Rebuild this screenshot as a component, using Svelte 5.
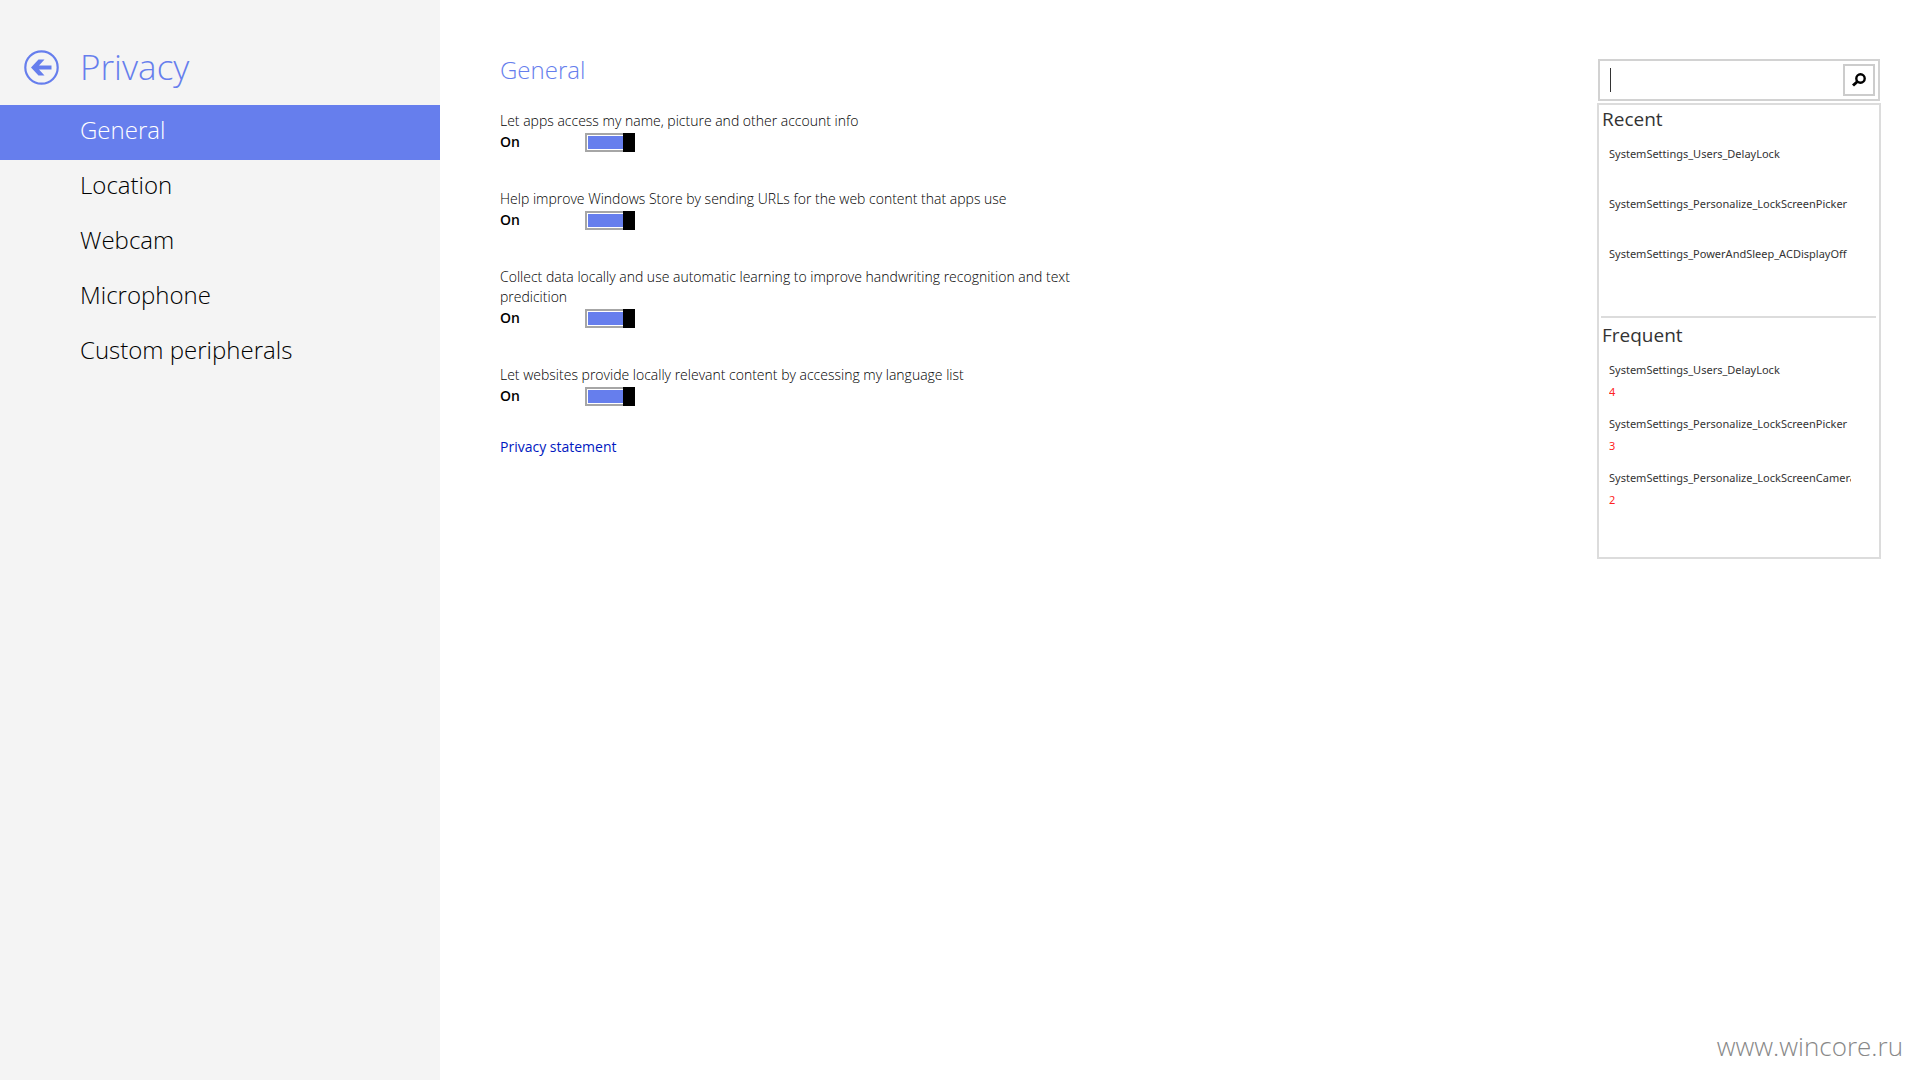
<script>
  const pages = ['General', 'Location', 'Webcam', 'Microphone', 'Custom peripherals'];

  let current = $state('General');
  let query = $state('');

  let options = $state([
    { id: 'account', text: 'Let apps access my name, picture and other account info', on: true },
    { id: 'urls', text: 'Help improve Windows Store by sending URLs for the web content that apps use', on: true },
    { id: 'learning', text: 'Collect data locally and use automatic learning to improve handwriting recognition and text predicition', on: true },
    { id: 'language', text: 'Let websites provide locally relevant content by accessing my language list', on: true }
  ]);

  const recent = [
    'SystemSettings_Users_DelayLock',
    'SystemSettings_Personalize_LockScreenPicker',
    'SystemSettings_PowerAndSleep_ACDisplayOff'
  ];

  const frequent = [
    { name: 'SystemSettings_Users_DelayLock', count: 4 },
    { name: 'SystemSettings_Personalize_LockScreenPicker', count: 3 },
    { name: 'SystemSettings_Personalize_LockScreenCamera', count: 2 }
  ];
</script>

<div class="page">
  <nav class="sidebar">
    <header>
      <button class="back" aria-label="Back">
        <svg viewBox="0 0 35 35" width="35" height="35">
          <circle cx="17.5" cy="17.5" r="16.2" fill="none" stroke="currentColor" stroke-width="2.2" />
          <path d="M7 17.5 14.5 9.5H20.5L15 15.5H27.5V19.500H15L20.5 25.5H14.5Z" fill="currentColor" />
        </svg>
      </button>
      <h1>Privacy</h1>
    </header>
    <ul>
      {#each pages as page}
        <li>
          <button class:active={page === current} onclick={() => (current = page)}>{page}</button>
        </li>
      {/each}
    </ul>
  </nav>

  <main>
    <h2>{current}</h2>
    <div class="options">
      {#each options as option (option.id)}
        <div class="option">
          <label for={option.id}>{option.text}</label>
          <div class="row">
            <span class="state">{option.on ? 'On' : 'Off'}</span>
            <input type="checkbox" role="switch" id={option.id} bind:checked={option.on} />
          </div>
        </div>
      {/each}
    </div>
    <a class="statement" href="#privacy">Privacy statement</a>
  </main>

  <aside>
    <form class="search" onsubmit={(e) => e.preventDefault()}>
      <span class="caret"></span>
      <input type="text" aria-label="Search settings" bind:value={query} />
      <button aria-label="Search">
        <svg viewBox="0 0 16 16" width="16" height="16">
          <circle cx="9.5" cy="6.5" r="4.2" fill="none" stroke="currentColor" stroke-width="2.4" />
          <path d="M6.5 9.5 2 13.5" fill="none" stroke="currentColor" stroke-width="3" />
        </svg>
      </button>
    </form>

    <div class="history">
      <section class="recent">
        <h3>Recent</h3>
        <ul>
          {#each recent as name}
            <li><span class="name">{name}</span></li>
          {/each}
        </ul>
      </section>
      <section class="frequent">
        <h3>Frequent</h3>
        <ul>
          {#each frequent as item}
            <li>
              <span class="name">{item.name}</span>
              <span class="count">{item.count}</span>
            </li>
          {/each}
        </ul>
      </section>
    </div>
  </aside>

  <div class="site">www.wincore.ru</div>
</div>

<style>
  :global(body) {
    margin: 0;
    background: #fff;
  }

  .page {
    --accent: #667eed;
    position: relative;
    display: flex;
    min-height: 100vh;
    font-family: 'Open Sans', 'Noto Sans', sans-serif;
    color: #000;
  }

  h1, h2, h3, ul {
    margin: 0;
    padding: 0;
    list-style: none;
  }

  h1, h2 {
    font-weight: 300;
  }

  button {
    font: inherit;
    color: inherit;
    background: none;
    border: none;
    padding: 0;
    cursor: pointer;
  }

  .sidebar {
    flex: 0 0 440px;
    background: #f4f4f4;
  }

  header {
    display: flex;
    align-items: center;
    gap: 21px;
    height: 75px;
    padding: 30px 24px 0;
    color: var(--accent);
  }

  .back,
  .back svg {
    display: block;
  }

  h1 {
    padding-bottom: 2px;
    font-size: 35px;
    line-height: 48px;
  }

  .sidebar li button {
    display: block;
    width: 100%;
    height: 55px;
    padding: 0 80px 6px;
    font-size: 24px;
    font-weight: 300;
    text-align: left;
  }

  .sidebar li .active {
    background: var(--accent);
    color: #fff;
  }

  main {
    flex: 1;
    padding: 52px 60px;
    font-size: 14px;
    font-weight: 300;
    line-height: 20px;
  }

  h2 {
    margin-bottom: 23px;
    color: var(--accent);
    font-size: 24px;
    line-height: 36px;
  }

  .options {
    display: flex;
    flex-direction: column;
    gap: 36px;
    max-width: 590px;
    margin-bottom: 30px;
  }

  .option label {
    display: block;
  }

  .row {
    display: flex;
    align-items: center;
    height: 22px;
  }

  .state {
    width: 85px;
    font-weight: 600;
  }

  .row input {
    appearance: none;
    position: relative;
    box-sizing: border-box;
    width: 50px;
    height: 19px;
    margin: 0;
    padding: 1px;
    border: 2px solid #a6a6a6;
    background: #fff;
  }

  .row input:checked {
    background: var(--accent) content-box;
  }

  .row input::before {
    content: '';
    position: absolute;
    top: -2px;
    bottom: -2px;
    left: -2px;
    width: 12px;
    background: #000;
  }

  .row input:checked::before {
    left: auto;
    right: -2px;
  }

  .statement {
    color: #0018c0;
    font-weight: 400;
    text-decoration: none;
  }

  aside {
    flex: 0 0 284px;
    min-width: 0;
    padding: 59px 39px 0 0;
    color: #333;
  }

  .search {
    display: flex;
    align-items: center;
    box-sizing: border-box;
    height: 42px;
    margin: 0 1px 2px;
    padding: 0 3px 0 10px;
    border: 2px solid #d2d2d2;
  }

  .caret {
    width: 1px;
    height: 24px;
    background: #333;
  }

  .search input {
    flex: 1;
    min-width: 0;
    border: none;
    outline: none;
    font: inherit;
    caret-color: transparent;
  }

  .search button {
    display: flex;
    align-items: center;
    justify-content: center;
    width: 32px;
    height: 32px;
    border: 2px solid #ccc;
    color: #000;
  }

  .history {
    padding: 0 3px 0 2px;
    border: 2px solid #dcdcdc;
  }

  h3 {
    padding: 0 1px;
    font-size: 19px;
    font-weight: 400;
    line-height: 28px;
  }

  .history ul {
    padding: 10px 25px 0 8px;
    font-family: 'Noto Sans', 'Open Sans', sans-serif;
    font-size: 11px;
    line-height: 22px;
  }

  .history span {
    display: block;
    overflow: hidden;
    white-space: nowrap;
  }

  .recent {
    height: 211px;
    border-bottom: 2px solid #dcdcdc;
  }

  .recent li {
    height: 50px;
  }

  .frequent {
    height: 236px;
    padding-top: 3px;
  }

  .frequent li {
    height: 54px;
  }

  .history .count {
    color: #f22;
  }

  .site {
    position: absolute;
    right: 17px;
    bottom: 16px;
    color: #888;
    font-size: 26px;
    font-weight: 300;
    line-height: 36px;
  }
</style>
